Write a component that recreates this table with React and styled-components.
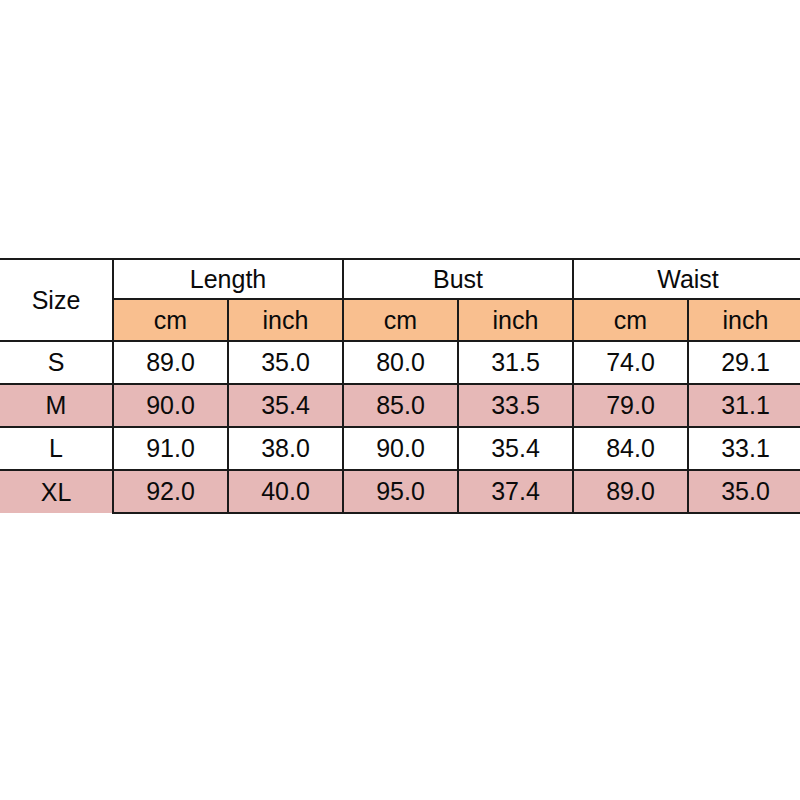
import React from 'react'
import styled, { createGlobalStyle } from 'styled-components'

const GlobalStyle = createGlobalStyle`
  html, body {
    margin: 0;
    padding: 0;
    background: #ffffff;
    overflow: hidden;
  }
`

const Page = styled.div`
  width: 800px;
  height: 800px;
  padding-top: 258px;
  box-sizing: border-box;
  overflow: hidden;
  background: #fff;
`

const SizeTable = styled.table`
  border-collapse: collapse;
  table-layout: fixed;
  width: 803px;
  font-family: 'Liberation Sans', Arial, sans-serif;
  font-size: 25px;
  color: #0a0a0a;
  border-top: 2px solid #1a1a1a;
`

const Cell = styled.td`
  height: ${(p) => p.h || 41}px;
  padding: 0;
  text-align: center;
  vertical-align: middle;
  line-height: 1;
  border: 2px solid #1a1a1a;
  background: ${(p) => (p.tone === 'orange' ? '#f9bf8f' : p.tone === 'pink' ? '#e6b8b7' : '#fff')};
  &:first-child {
    border-left: none;
  }
`

const SizeCell = styled(Cell)`
  border-bottom: ${(p) => (p.last ? 'none' : '2px solid #1a1a1a')};
`

const headers = ['Length', 'Bust', 'Waist']

const rows = [
  { size: 'S', values: ['89.0', '35.0', '80.0', '31.5', '74.0', '29.1'] },
  { size: 'M', values: ['90.0', '35.4', '85.0', '33.5', '79.0', '31.1'] },
  { size: 'L', values: ['91.0', '38.0', '90.0', '35.4', '84.0', '33.1'] },
  { size: 'XL', values: ['92.0', '40.0', '95.0', '37.4', '89.0', '35.0'] },
]

const App = () => (
  <Page>
    <GlobalStyle />
    <SizeTable>
      <colgroup>
        <col style={{ width: 113 }} />
        {[0, 1, 2, 3, 4, 5].map((i) => (
          <col key={i} style={{ width: 115 }} />
        ))}
      </colgroup>
      <tbody>
        <tr>
          <SizeCell rowSpan={2} h={40}>Size</SizeCell>
          {headers.map((h) => (
            <Cell key={h} colSpan={2} h={38}>{h}</Cell>
          ))}
        </tr>
        <tr>
          {headers.map((h) => (
            <React.Fragment key={h}>
              <Cell tone="orange" h={40}>cm</Cell>
              <Cell tone="orange" h={40}>inch</Cell>
            </React.Fragment>
          ))}
        </tr>
        {rows.map((r, ri) => {
          const tone = ri % 2 === 1 ? 'pink' : undefined
          return (
            <tr key={r.size}>
              <SizeCell tone={tone} last={ri === rows.length - 1}>{r.size}</SizeCell>
              {r.values.map((v, i) => (
                <Cell key={i} tone={tone}>{v}</Cell>
              ))}
            </tr>
          )
        })}
      </tbody>
    </SizeTable>
  </Page>
)

export default App
